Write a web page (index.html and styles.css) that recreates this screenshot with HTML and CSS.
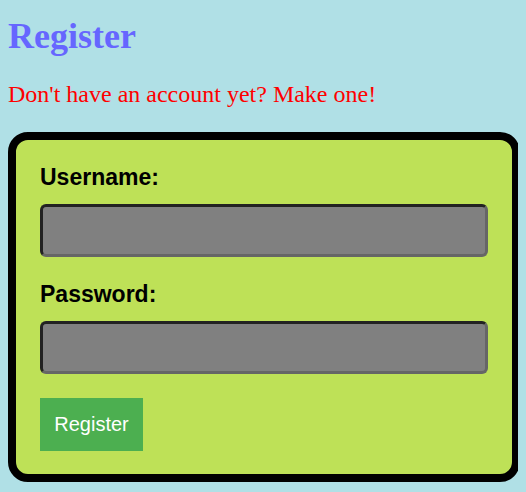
FILE: index.html
```html
<!DOCTYPE html>
<html>
<head>
<meta charset="utf-8">
<link rel="stylesheet" href="styles.css">
</head>
<body>
<h1 class="title">Register</h1>
<p class="lead">Don't have an account yet? Make one!</p>
<form class="card">
  <label class="field-label" for="u">Username:</label>
  <input class="field-input" id="u" type="text">
  <label class="field-label" for="p">Password:</label>
  <input class="field-input" id="p" type="password">
  <button class="submit" type="button">Register</button>
</form>
</body>
</html>
```
FILE: styles.css
```css
html, body {
  background: #b0e0e6;
}
body {
  margin: 0 8px 8px;
  padding-top: 15px;
  font-family: "Liberation Serif", "Times New Roman", serif;
}
.title {
  margin: 0 0 24px;
  font-size: 36px;
  font-weight: bold;
  color: #6666ff;
}
.lead {
  margin: 24px 0 24px;
  font-size: 24px;
  color: #ff0000;
}
.card {
  width: 512px;
  box-sizing: border-box;
  background: #bee157;
  border: 8px solid #000;
  border-radius: 20px;
  padding: 24px 24px 23px;
  display: flex;
  flex-direction: column;
  align-items: flex-start;
  font-family: "Liberation Sans", Arial, sans-serif;
}
.field-label {
  font-size: 23px;
  font-weight: bold;
  color: #000;
  margin-bottom: 13px;
}
.field-input {
  width: 100%;
  height: 53px;
  box-sizing: border-box;
  margin: 0 0 24px;
  background: #808080;
  border: 3px solid;
  border-color: #222 #666 #666 #222;
  border-radius: 6px;
}
.submit {
  background: #4caf50;
  color: #fff;
  border: none;
  font-family: "Liberation Sans", Arial, sans-serif;
  font-size: 20px;
  width: 103px;
  height: 53px;
  padding: 0;
}
```
